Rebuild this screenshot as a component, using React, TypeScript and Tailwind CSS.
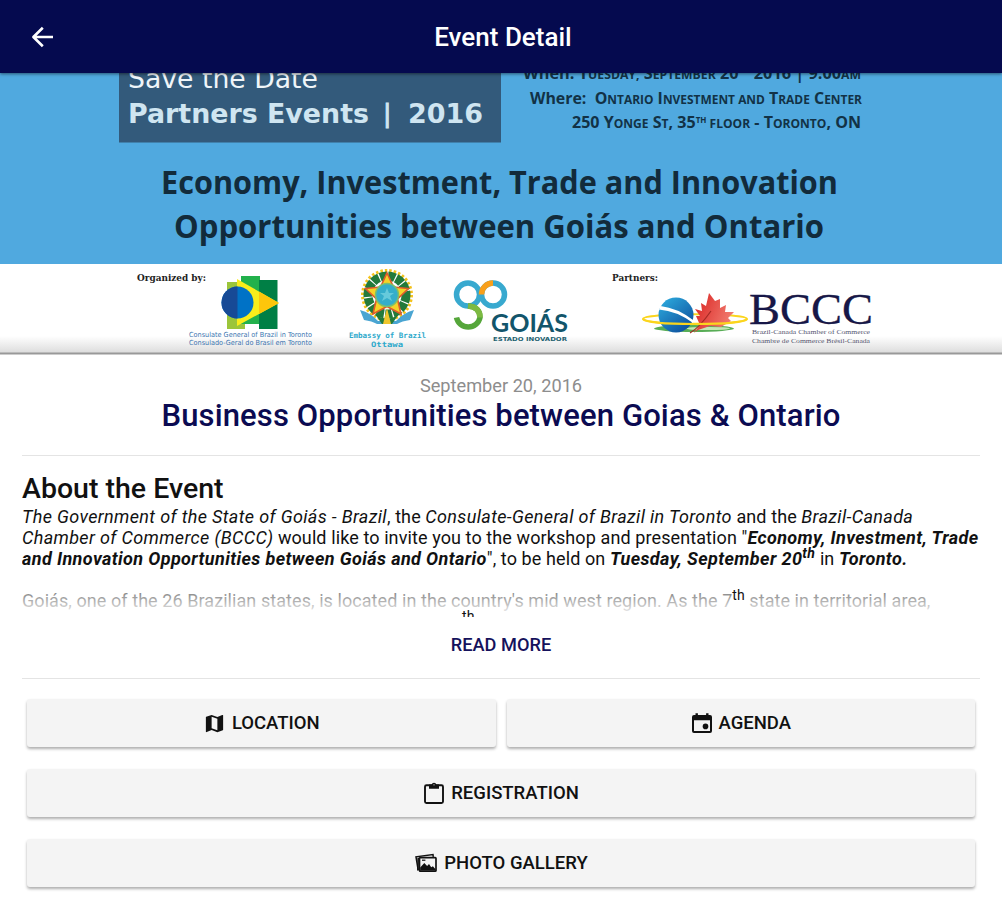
import type { ReactNode } from "react";
import { IoMdMap } from "react-icons/io";

type ActionProps = {
  icon: ReactNode;
  label: string;
};

function BackArrow() {
  return (
    <svg viewBox="0 0 24 24" className="h-6 w-6" fill="none" stroke="currentColor" strokeWidth="2.6">
      <path d="M12.800 2.800 3.400 12l9.400 9.200M3.400 12H23" strokeLinejoin="round" />
    </svg>
  );
}

function CalendarIcon() {
  return (
    <svg viewBox="0 0 22 22" className="h-[22px] w-[22px]" fill="currentColor">
      <path
        fillRule="evenodd"
        d="M4.500 1.200h2.400V3h8.200V1.200h2.400V3h1.500a2 2 0 0 1 2 2v14a2 2 0 0 1-2 2H3a2 2 0 0 1-2-2V5a2 2 0 0 1 2-2h1.500zM3 8.200V19h16V8.200z"
      />
      <circle cx="14.500" cy="14.400" r="2.800" />
    </svg>
  );
}

function ClipboardIcon() {
  return (
    <svg viewBox="0 0 22 24" className="h-6 w-[22px]" fill="currentColor">
      <rect x="2" y="4.200" width="18" height="17.800" rx="1.500" fill="none" stroke="currentColor" strokeWidth="1.900" />
      <path d="M6 3.500h2.600a2.500 2.500 0 0 1 4.800 0H16v4.200H6z" />
      <circle cx="11" cy="3.800" r="0.600" fill="#f4f4f4" />
    </svg>
  );
}

function PhotosIcon() {
  return (
    <svg viewBox="0 0 24 22" className="h-[22px] w-6" fill="none" stroke="currentColor">
      <path d="M4.200 18.200 2 4.800 19 2.600l.3 2.200" strokeWidth="1.500" />
      <path d="M3.900 18.400 4.200 5.800" strokeWidth="1.600" />
      <rect x="5.500" y="5.600" width="16.500" height="13.600" rx="0.800" strokeWidth="1.700" />
      <path d="m6.200 18.600 0-3 4.100-4.600 2.800 3 1.900-2 2.200 3.200 1.700-1 2.600 3v1.400z" fill="currentColor" strokeWidth="0" />
      <path d="M8 8.200h3.400" strokeWidth="1.200" />
    </svg>
  );
}

function ActionButton({ icon, label }: ActionProps) {
  return (
    <button className="flex h-12 w-full items-center justify-center gap-1.5 rounded-[3px] bg-[#f4f4f4] text-[18.5px] font-medium text-[#111] shadow-[0_2px_3px_rgba(0,0,0,0.32)]">
      {icon}
      <span className="pt-0.5">{label}</span>
    </button>
  );
}

function ConsulateLogo() {
  return (
    <g>
      <rect x="227" y="282" width="18" height="47" fill="#9bc53a" />
      <rect x="241" y="276" width="19" height="48" fill="#22b14c" />
      <rect x="259" y="280" width="18.500" height="49" fill="#007f45" />
      <path d="M237 279 279 303l-42 23z" fill="#f9ed1b" />
      <path d="M259 291.500 279 303l-20 11z" fill="#fdc60b" />
      <circle cx="237.500" cy="302.500" r="16" fill="#0072c6" />
      <path d="M237.500 286.500a16 16 0 0 0 0 32z" fill="#174a96" />
      <g fill="#3b75b0" fontFamily="DejaVu Sans" fontSize="7">
        <text x="189" y="337" textLength="123" lengthAdjust="spacingAndGlyphs">
          Consulate General of Brazil in Toronto
        </text>
        <text x="189" y="345" textLength="123" lengthAdjust="spacingAndGlyphs">
          Consulado-Geral do Brasil em Toronto
        </text>
      </g>
    </g>
  );
}

function EmbassyLogo() {
  return (
    <g>
      <circle cx="387" cy="295" r="24.500" fill="none" stroke="#f4c21c" strokeWidth="3" strokeDasharray="2.500 2" />
      <circle cx="387" cy="295" r="19" fill="none" stroke="#237a3b" strokeWidth="9" strokeDasharray="7 1.200" />
      <path
        d="m387 273 6.500 14 15 1.500-11 10.500 3.500 15-14-7.500-14 7.500 3.500-15-11-10.500 15-1.500z"
        fill="#f5d327"
        stroke="#df5b2a"
        strokeWidth="1.600"
      />
      <circle cx="387" cy="295" r="11.500" fill="#35aecb" stroke="#7dbf6c" strokeWidth="1.500" />
      <path d="m387 288 2 5h5l-4 3 2 5-5-3-5 3 2-5-4-3h5z" fill="#66cadb" />
      <path d="M360 310q11 3 18 11h18q7-8 18-11l-4 10q-8 1-13 4h-20q-5-3-13-4z" fill="#4aa5d2" />
      <path d="M375 314q12 9 24 0l-7 10h-10z" fill="#237a3b" />
      <path d="m387 308 4 16h-8z" fill="#eec52c" />
      <g fill="#2ea9cb" fontFamily="DejaVu Sans Mono" fontSize="7.500" fontWeight="700">
        <text x="349" y="338" textLength="77" lengthAdjust="spacingAndGlyphs">
          Embassy of Brazil
        </text>
        <text x="371" y="347" textLength="32" lengthAdjust="spacingAndGlyphs">
          Ottawa
        </text>
      </g>
    </g>
  );
}

function GoiasLogo() {
  return (
    <g>
      <g fill="none" strokeWidth="5.500">
        <circle cx="468" cy="294.500" r="11.500" stroke="#38a9cf" />
        <circle cx="493" cy="294.500" r="11.500" stroke="#38a9cf" />
        <path d="M481.500 294.500a11.500 11.500 0 0 1 11.500-11.500" stroke="#f9a01b" />
        <path d="M468 306q12 1 12 11.500a12 12 0 0 1-23.500 0" stroke="#55a63a" />
        <path d="M468 306q12 1 12 11.500" stroke="#7dba42" />
      </g>
      <text x="491" y="332" fill="#12556b" fontFamily="Lato" fontWeight="700" fontSize="24" textLength="77" lengthAdjust="spacingAndGlyphs">
        GOIÁS
      </text>
      <text x="493" y="341" fill="#21606f" fontFamily="DejaVu Sans" fontWeight="700" fontSize="5.500" textLength="74" lengthAdjust="spacingAndGlyphs">
        ESTADO INOVADOR
      </text>
    </g>
  );
}

function ChamberLogo() {
  return (
    <g>
      <defs>
        <linearGradient id="globe" x1="0" y1="0" x2="0.800" y2="1">
          <stop offset="0" stopColor="#2fb1e2" />
          <stop offset="1" stopColor="#0d4e9c" />
        </linearGradient>
        <linearGradient id="leaf" x1="0" y1="0" x2="1" y2="0.400">
          <stop offset="0" stopColor="#d9201f" />
          <stop offset="1" stopColor="#f0796d" />
        </linearGradient>
      </defs>
      <ellipse cx="694" cy="328.500" rx="40" ry="3.500" fill="#58ad56" />
      <ellipse cx="708" cy="328.500" rx="22" ry="1.600" fill="#c4e6b4" />
      <ellipse cx="695" cy="319" rx="52" ry="4.800" fill="none" stroke="#fbd51d" strokeWidth="2" />
      <ellipse cx="676" cy="315" rx="17.500" ry="17.500" fill="url(#globe)" />
      <path d="M660.500 306q17 2 32.500 14v3q-16-12-34-13.500z" fill="#fff" />
      <path
        d="m709 293 6 8 5-2 0 9 6-3-1 7 9 0-6 6 3 3-10 6-11-1-12 4-4 3 6-8-4-9 4 0-5-7 7 2-1-8 5 3z"
        fill="url(#leaf)"
      />
      <path d="M690 333q9-5 21-22" fill="none" stroke="#a52a24" strokeWidth="1.200" />
      <path d="M643 319q4 5 52 5t52-5" fill="none" stroke="#fbd51d" strokeWidth="2.200" />
      <text
        x="749"
        y="324"
        fill="#171747"
        stroke="#171747"
        strokeWidth="0.300"
        fontFamily="Liberation Serif"
        fontSize="44"
        textLength="124"
        lengthAdjust="spacingAndGlyphs"
      >
        BCCC
      </text>
      <g fill="#55556f" fontFamily="Liberation Serif" fontSize="7">
        <text x="752" y="334" textLength="118" lengthAdjust="spacingAndGlyphs">
          Brazil-Canada Chamber of Commerce
        </text>
        <text x="752" y="343" textLength="118" lengthAdjust="spacingAndGlyphs">
          Chambre de Commerce Brésil-Canada
        </text>
      </g>
    </g>
  );
}

// Event artwork, scrolled partly under the header bar
function EventBanner() {
  return (
    <svg viewBox="0 73 1002 282" className="block h-[282px] w-full shrink-0">
      <defs>
        <linearGradient id="banner-foot" x1="0" y1="0" x2="0" y2="1">
          <stop offset="0" stopColor="#fff" />
          <stop offset="1" stopColor="#dcdcdc" />
        </linearGradient>
      </defs>
      <rect y="73" width="1002" height="191" fill="#50a9df" />
      <rect x="119" y="60" width="382" height="82.500" fill="#335a7b" />
      <g fontFamily="DejaVu Sans">
        <text x="128" y="88" fill="#eff5f9" fontSize="26" textLength="190" lengthAdjust="spacingAndGlyphs">
          Save the Date
        </text>
        <g fill="#cfe5f1" fontSize="27" fontWeight="700">
          <text x="128" y="123" textLength="241" lengthAdjust="spacingAndGlyphs">
            Partners Events
          </text>
          <text x="383" y="122" fontSize="25" fontWeight="400" stroke="#cfe5f1">
            |
          </text>
          <text x="408" y="123" textLength="75" lengthAdjust="spacingAndGlyphs">
            2016
          </text>
        </g>
      </g>
      <g fill="#123246" fontFamily="Open Sans" fontWeight="700" fontSize="16">
        <text x="523" y="79" textLength="338" lengthAdjust="spacingAndGlyphs">
          When: T<tspan fontSize="12">UESDAY,</tspan> S<tspan fontSize="12">EPTEMBER</tspan> 20
          <tspan fontSize="8" dy="-6">TH</tspan>
          <tspan dy="6"> 2016 | 9:00</tspan>
          <tspan fontSize="12">AM</tspan>
        </text>
        <text x="530" y="104" textLength="332" lengthAdjust="spacingAndGlyphs">
          Where:{"\u00a0 "}O<tspan fontSize="12">NTARIO</tspan> I<tspan fontSize="12">NVESTMENT AND</tspan> T
          <tspan fontSize="12">RADE</tspan> C<tspan fontSize="12">ENTER</tspan>
        </text>
        <text x="572" y="128" textLength="289" lengthAdjust="spacingAndGlyphs">
          250 Y<tspan fontSize="12">ONGE</tspan> S<tspan fontSize="12">T</tspan>, 35
          <tspan fontSize="8" dy="-5">TH</tspan>
          <tspan fontSize="12" dy="5"> FLOOR</tspan> - T<tspan fontSize="12">ORONTO</tspan>, ON
        </text>
      </g>
      <g fill="#122b3b" fontFamily="Open Sans" fontWeight="700" fontSize="33">
        <text x="161" y="194" textLength="677" lengthAdjust="spacingAndGlyphs">
          Economy, Investment, Trade and Innovation
        </text>
        <text x="174" y="238" textLength="650" lengthAdjust="spacingAndGlyphs">
          Opportunities between Goiás and Ontario
        </text>
      </g>
      <rect y="264" width="1002" height="91" fill="#fff" />
      <rect y="336" width="1002" height="17" fill="url(#banner-foot)" />
      <rect y="352.500" width="1002" height="2" fill="#999" />
      <g fill="#222" fontFamily="DejaVu Serif" fontWeight="700" fontSize="9">
        <text x="137" y="281" textLength="69" lengthAdjust="spacingAndGlyphs">
          Organized by:
        </text>
        <text x="612" y="281" textLength="46" lengthAdjust="spacingAndGlyphs">
          Partners:
        </text>
      </g>
      <ConsulateLogo />
      <EmbassyLogo />
      <GoiasLogo />
      <ChamberLogo />
    </svg>
  );
}

function Em({ bold, children }: { bold?: boolean; children: ReactNode }) {
  return <i className={bold ? "font-bold tracking-[0.39px]" : "tracking-[0.35px]"}>{children}</i>;
}

// Collapsed copy: fades out, only the ordinals stay above the fade
function AboutText() {
  return (
    <div className="relative h-[111px] overflow-hidden text-[18px] leading-[21px] tracking-[0.1px] whitespace-nowrap text-[#111]">
      <p>
        <Em>The Government of the State of Goiás - Brazil</Em>, the <Em>Consulate-General of Brazil in Toronto</Em> and
        the <Em>Brazil-Canada</Em>
        <br />
        <Em>Chamber of Commerce (BCCC)</Em> would like to invite you to the workshop and presentation "
        <Em bold>Economy, Investment, Trade</Em>
        <br />
        <Em bold>and Innovation Opportunities between Goiás and Ontario</Em>", to be held on{" "}
        <Em bold>
          Tuesday, September 20<sup className="text-[14px]">th</sup>
        </Em>{" "}
        in <Em bold>Toronto.</Em>
      </p>
      <p className="mt-[21px] tracking-[0.07px]">
        Goiás, one of the 26 Brazilian states, is located in the country's mid west region. As the 7
        <sup className="z-10 text-[14px]">th</sup> state in territorial area,
        <br />
        <sup className="z-10 ml-[440px] text-[14px]">th</sup>
      </p>
      <div className="absolute inset-x-0 bottom-0 h-[44px] bg-gradient-to-b from-white/20 via-white/55 to-white to-100%" />
    </div>
  );
}

export default function App() {
  return (
    <div className="flex h-[900px] w-full flex-col overflow-hidden bg-white font-[Roboto,sans-serif]">
      <header className="z-10 grid h-[73px] shrink-0 grid-cols-[1fr_auto_1fr] items-center bg-[#050a4f] pr-[26px] pl-[30px] text-white shadow-[0_1px_3px_rgba(0,0,0,0.5)]">
        <BackArrow />
        <h1 className="pt-0.5 text-[26px] font-medium">Event Detail</h1>
      </header>

      <EventBanner />

      <main className="flex flex-col px-[22px]">
        <div className="flex h-[101px] flex-col items-center border-b border-[#e4e4e4] pt-5">
          <p className="text-[18.2px] leading-[22px] text-[#8d8d8d]">September 20, 2016</p>
          <h2 className="text-[31px] leading-[37px] font-medium tracking-[0.13px] text-[#0b0b52]">
            Business Opportunities between Goias &amp; Ontario
          </h2>
        </div>

        <section className="flex h-[223px] flex-col border-b border-[#e4e4e4] pt-4">
          <h3 className="text-[28.5px] leading-[34px] font-medium text-[#111]">About the Event</h3>
          <AboutText />
          <button className="mt-[16px] self-center text-[18.2px] leading-[24px] font-medium text-[#15125c]">
            READ MORE
          </button>
        </section>

        <div className="mt-5 grid grid-cols-2 gap-x-[11px] gap-y-[22px] px-[5px]">
          <ActionButton icon={<IoMdMap className="h-[23px] w-[23px]" />} label="LOCATION" />
          <ActionButton icon={<CalendarIcon />} label="AGENDA" />
          <div className="col-span-2">
            <ActionButton icon={<ClipboardIcon />} label="REGISTRATION" />
          </div>
          <div className="col-span-2">
            <ActionButton icon={<PhotosIcon />} label="PHOTO GALLERY" />
          </div>
        </div>
      </main>
    </div>
  );
}
